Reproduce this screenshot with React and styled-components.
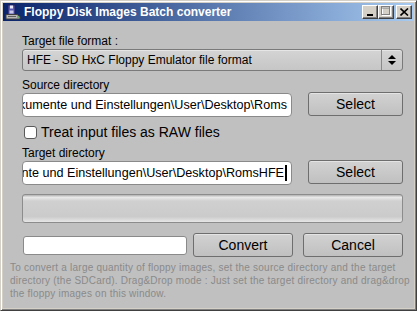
import React from 'react';
import styled, { createGlobalStyle } from 'styled-components';

const GlobalStyle = createGlobalStyle`
  html, body {
    margin: 0;
    padding: 0;
    background: #c0c0c0;
  }
  * {
    box-sizing: border-box;
  }
`;

const FloppyIcon = () => (
  <svg width='16' height='16' viewBox='0 0 16 16'>
    <rect x='3' y='1' width='7' height='10' fill='#5a5ab4' stroke='#20205a' strokeWidth='1' />
    <rect x='5' y='1.5' width='3' height='3' fill='#e8e8f8' />
    <rect x='4.5' y='6.5' width='4' height='3' fill='#c8c8e8' />
    <path d='M1 10.5 L12 10.5 L15 12.5 L15 15 L1 15 Z' fill='#b8b8b8' stroke='#404040' strokeWidth='1' />
    <rect x='3' y='12' width='8' height='1' fill='#606060' />
    <rect x='12' y='12.5' width='2' height='1' fill='#20a020' />
  </svg>
);

const TitleButtons = () => (
  <ButtonGroup>
    <CaptionButton>
      <svg width='8' height='8' viewBox='0 0 8 8'>
        <rect x='1' y='6' width='6' height='2' fill='#000' />
      </svg>
    </CaptionButton>
    <CaptionButton>
      <svg width='10' height='10' viewBox='0 0 10 10'>
        <rect x='1.5' y='1.5' width='8' height='8' fill='none' stroke='#fff' />
        <rect x='0.5' y='0.5' width='8' height='8' fill='none' stroke='#808080' />
        <rect x='0.5' y='1.5' width='8' height='1' fill='#808080' />
      </svg>
    </CaptionButton>
    <CloseButton>
      <svg width='9' height='8' viewBox='0 0 9 8'>
        <path d='M0.5 0.5 L8 7.5 M8 0.5 L0.5 7.5' stroke='#000' strokeWidth='1.6' />
      </svg>
    </CloseButton>
  </ButtonGroup>
);

const ComboArrows = () => (
  <svg width='8' height='10' viewBox='0 0 8 10'>
    <path d='M4 0 L8 4 L0 4 Z' fill='#000' />
    <path d='M0 6 L8 6 L4 10 Z' fill='#000' />
  </svg>
);

const App = () => (
  <>
    <GlobalStyle />
    <Window>
      <TitleBar>
        <FloppyIcon />
        <Title>Floppy Disk Images Batch converter</Title>
        <TitleButtons />
      </TitleBar>

      <Body>
        <Form>
          <Label>Target file format :</Label>
          <Combo>
            <ComboText>HFE - SD HxC Floppy Emulator file format</ComboText>
            <ComboButton>
              <ComboArrows />
            </ComboButton>
          </Combo>

          <Label $top={8}>Source directory</Label>
          <PathRow>
            <PathField>
              <span>C:\Dokumente und Einstellungen\User\Desktop\Roms</span>
            </PathField>
            <Button $width={95}>Select</Button>
          </PathRow>

          <CheckRow>
            <CheckBox />
            <CheckLabel>Treat input files as RAW files</CheckLabel>
          </CheckRow>

          <Label $top={6}>Target directory</Label>
          <PathRow>
            <PathField>
              <span>C:\Dokumente und Einstellungen\User\Desktop\RomsHFE</span>
              <Caret />
            </PathField>
            <Button $width={95}>Select</Button>
          </PathRow>

          <Progress />

          <ActionRow>
            <StatusField />
            <Button $width={100}>Convert</Button>
            <Button $width={100}>Cancel</Button>
          </ActionRow>
        </Form>

        <Help>
          To convert a large quantity of floppy images, set the source directory and the target
          <br />
          directory (the SDCard). Drag&amp;Drop mode : Just set the target directory and drag&amp;drop
          <br />
          the floppy images on this window.
        </Help>
      </Body>
    </Window>
  </>
);

const Window = styled.div`
  display: flex;
  flex-direction: column;
  width: 417px;
  height: 311px;
  padding: 2px;
  background: #d4d0c8;
  border: 1px solid;
  border-color: #d4d0c8 #404040 #404040 #d4d0c8;
  box-shadow: inset 1px 1px 0 #ffffff, inset -1px -1px 0 #808080;
`;

const TitleBar = styled.div`
  display: flex;
  align-items: center;
  height: 18px;
  padding: 0 2px;
  background: linear-gradient(to right, #0a246a, #a6caf0);
`;

const Title = styled.span`
  flex: 1;
  margin-left: 3px;
  color: #ffffff;
  font: bold 12px 'Liberation Sans', Arial, sans-serif;
  white-space: nowrap;
`;

const ButtonGroup = styled.div`
  display: flex;
  align-items: center;
`;

const CaptionButton = styled.div`
  display: flex;
  align-items: flex-end;
  justify-content: center;
  width: 16px;
  height: 14px;
  padding-bottom: 2px;
  background: #d4d0c8;
  border: 1px solid;
  border-color: #ffffff #404040 #404040 #ffffff;
  box-shadow: inset -1px -1px 0 #808080;
`;

const CloseButton = styled(CaptionButton)`
  align-items: center;
  padding-bottom: 0;
  margin-left: 2px;
`;

const Body = styled.div`
  flex: 1;
  display: flex;
  flex-direction: column;
  background: #c0c0c0;
`;

const Form = styled.div`
  display: flex;
  flex-direction: column;
  padding: 14px 11px 0 19px;
`;

const Label = styled.div`
  margin-top: ${({ $top = 0 }) => $top}px;
  font: 12px/13px 'Liberation Sans', Arial, sans-serif;
  color: #000000;
`;

const Combo = styled.div`
  display: flex;
  height: 22px;
  margin-top: 1px;
  border: 1px solid #7a7a7a;
  border-radius: 3px;
  background: linear-gradient(#d4d4d4, #c6c6c6);
  box-shadow: inset 0 1px 0 #e6e6e6;
`;

const ComboText = styled.div`
  flex: 1;
  display: flex;
  align-items: center;
  padding-left: 4px;
  font: 12px 'Liberation Sans', Arial, sans-serif;
  color: #000000;
`;

const ComboButton = styled.div`
  display: flex;
  align-items: center;
  justify-content: center;
  width: 21px;
  border-left: 1px solid #8a8a8a;
`;

const PathRow = styled.div`
  display: flex;
  align-items: flex-start;
  justify-content: space-between;
  height: 25px;
`;

const PathField = styled.div`
  display: flex;
  align-items: center;
  justify-content: flex-end;
  width: 270px;
  height: 24px;
  margin-top: 1px;
  padding: 0 4px 0 0;
  overflow: hidden;
  white-space: nowrap;
  background: #ffffff;
  border: 1px solid #8a8a8a;
  border-radius: 4px;
  font: 12.6px 'Liberation Sans', Arial, sans-serif;
  color: #000000;
`;

const Caret = styled.span`
  flex: 0 0 2px;
  height: 16px;
  margin-left: 1px;
  background: #000000;
`;

const Button = styled.div`
  display: flex;
  align-items: center;
  justify-content: center;
  width: ${({ $width }) => $width}px;
  height: 24px;
  border: 1px solid #6e6e6e;
  border-radius: 3px;
  background: linear-gradient(#d2d2d2, #c0c0c0);
  box-shadow: inset 0 1px 0 #e4e4e4;
  font: 14px 'Liberation Sans', Arial, sans-serif;
  color: #000000;
`;

const CheckRow = styled.div`
  display: flex;
  align-items: center;
  gap: 4px;
  height: 18px;
  margin-top: 6px;
  padding-left: 2px;
`;

const CheckBox = styled.span`
  width: 13px;
  height: 13px;
  background: #ffffff;
  border: 1px solid #5a5a5a;
  border-radius: 3px;
`;

const CheckLabel = styled.span`
  font: 14px/18px 'Liberation Sans', Arial, sans-serif;
  color: #000000;
`;

const Progress = styled.div`
  height: 29px;
  margin-top: 9px;
  border: 1px solid #8c8c8c;
  border-radius: 3px;
  background: linear-gradient(#bdbdbd 0, #bdbdbd 1px, #ececec 2px, #d0d0d0 6px, #cbcbcb 80%, #e6e6e6 100%);
`;

const ActionRow = styled.div`
  display: flex;
  align-items: center;
  height: 24px;
  margin-top: 10px;
`;

const StatusField = styled.div`
  width: 164px;
  height: 19px;
  margin: 0 6px 0 1px;
  background: #ffffff;
  border: 1px solid #8a8a8a;
  border-radius: 3px;
  & + div + div {
    margin-left: 10px;
  }
`;

const Help = styled.div`
  margin-top: 4px;
  padding-left: 7px;
  font: 10px/13px 'Liberation Sans', Arial, sans-serif;
  letter-spacing: 0.22px;
  color: #8a8a8a;
  white-space: nowrap;
`;

export default App;
